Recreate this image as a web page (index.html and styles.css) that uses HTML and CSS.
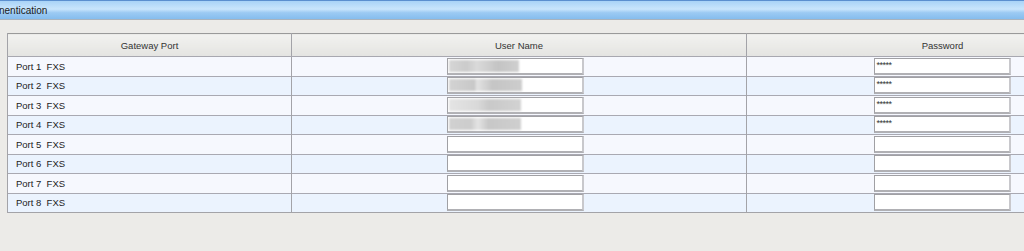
FILE: index.html
```html
<!DOCTYPE html>
<html>
<head>
<meta charset="utf-8">
<link rel="stylesheet" href="styles.css">
</head>
<body>
<div class="titlebar"><span class="title">nentication</span></div>
<div class="content">
<table class="grid">
<colgroup><col class="c1"><col class="c2"><col class="c3"></colgroup>
<thead>
<tr><th>Gateway Port</th><th>User Name</th><th>Password</th></tr>
</thead>
<tbody>
<tr class="odd"><td class="port">Port 1&nbsp;&nbsp;FXS</td><td class="cell"><div class="box"><span class="blur b1"></span></div></td><td class="cell"><div class="box"><span class="pw">*****</span></div></td></tr>
<tr class="even"><td class="port">Port 2&nbsp;&nbsp;FXS</td><td class="cell"><div class="box"><span class="blur b2"></span></div></td><td class="cell"><div class="box"><span class="pw">*****</span></div></td></tr>
<tr class="odd"><td class="port">Port 3&nbsp;&nbsp;FXS</td><td class="cell"><div class="box"><span class="blur b3"></span></div></td><td class="cell"><div class="box"><span class="pw">*****</span></div></td></tr>
<tr class="even"><td class="port">Port 4&nbsp;&nbsp;FXS</td><td class="cell"><div class="box"><span class="blur b4"></span></div></td><td class="cell"><div class="box"><span class="pw">*****</span></div></td></tr>
<tr class="odd"><td class="port">Port 5&nbsp;&nbsp;FXS</td><td class="cell"><div class="box"></div></td><td class="cell"><div class="box"></div></td></tr>
<tr class="even"><td class="port">Port 6&nbsp;&nbsp;FXS</td><td class="cell"><div class="box"></div></td><td class="cell"><div class="box"></div></td></tr>
<tr class="odd"><td class="port">Port 7&nbsp;&nbsp;FXS</td><td class="cell"><div class="box"></div></td><td class="cell"><div class="box"></div></td></tr>
<tr class="even"><td class="port">Port 8&nbsp;&nbsp;FXS</td><td class="cell"><div class="box"></div></td><td class="cell"><div class="box"></div></td></tr>
</tbody>
</table>
</div>
</body>
</html>
```
FILE: styles.css
```css
html, body {
  margin: 0;
  padding: 0;
  background: #ecebe8;
  overflow: hidden;
  width: 1024px;
  height: 251px;
  font-family: "Liberation Sans", Arial, sans-serif;
  font-size: 9.5px;
  color: #222;
}
.titlebar {
  height: 18px;
  border-top: 1px solid #5b8fcf;
  border-bottom: 1px solid #a9b3bd;
  background: linear-gradient(#a9d3f7 0%, #c9e5fc 45%, #9ccaf3 65%, #86bdee 100%);
  display: flex;
  align-items: center;
}
.title {
  font-size: 10px;
  color: #1a1a1a;
  margin-left: -1px;
  padding-top: 1px;
}
.content {
  padding: 13px 0 0 7px;
  width: 1200px;
}
.grid {
  border-collapse: collapse;
  width: 1131px;
  table-layout: fixed;
  border: 1px solid #a3a3a8;
  border-top-color: #9a9a9a;
}
.c1 { width: 284px; }
.c2 { width: 455px; }
.c3 { width: 392px; }
.grid th {
  height: 22px;
  padding: 0;
  font-weight: normal;
  color: #333;
  background: linear-gradient(#f2f2f0, #e4e4e1);
  border-left: 1px solid #a3a3a8;
  border-bottom: 1px solid #a8a8b0;
  text-align: center;
  vertical-align: middle;
}
.grid td {
  height: 18.5px;
  padding: 0;
  border-left: 1px solid #a3a3a8;
  border-top: 1px solid #a9a9b2;
  vertical-align: middle;
}
.odd td { background: #f6f8fe; }
.even td { background: #ebf3fe; }
.port {
  padding-left: 8px !important;
  color: #222;
}
.cell {
  text-align: center;
}
.box {
  position: relative;
  display: inline-block;
  vertical-align: middle;
  width: 134px;
  height: 14px;
  background: #fff;
  border: 2px solid #a0a0a4;
  border-right-color: #c8c8cc;
  border-bottom-color: #b0b0b4;
  border-top-width: 1px;
  border-left-width: 1px;
  text-align: left;
  margin-left: -7px;
}
.blur {
  position: absolute;
  left: 1px;
  top: 1px;
  height: 12px;
  background: #d4d4d4;
  filter: blur(1.2px);
}
.b1 { width: 70px; background: linear-gradient(90deg, #d6d6d6, #cbcbcb 25%, #dadada 40%, #c4c4c4 70%, #cfcfcf); }
.b2 { width: 73px; background: linear-gradient(90deg, #d3d3d3, #c8c8c8 35%, #e3e3e3 38%, #c5c5c5 60%, #cdcdcd); }
.b3 { width: 72px; background: linear-gradient(90deg, #e4e4e4, #d9d9d9 40%, #c9c9c9 55%, #d2d2d2); }
.b4 { width: 72px; background: linear-gradient(90deg, #d1d1d1, #cccccc 30%, #e4e4e4 40%, #c7c7c7 55%, #cfcfcf); }
.pw {
  position: absolute;
  left: 2px;
  top: 0px;
  font-size: 9px;
  line-height: 12px;
  letter-spacing: -0.5px;
  color: #333;
}
.grid td.cell:last-child .box { margin-left: -1px; }
```
